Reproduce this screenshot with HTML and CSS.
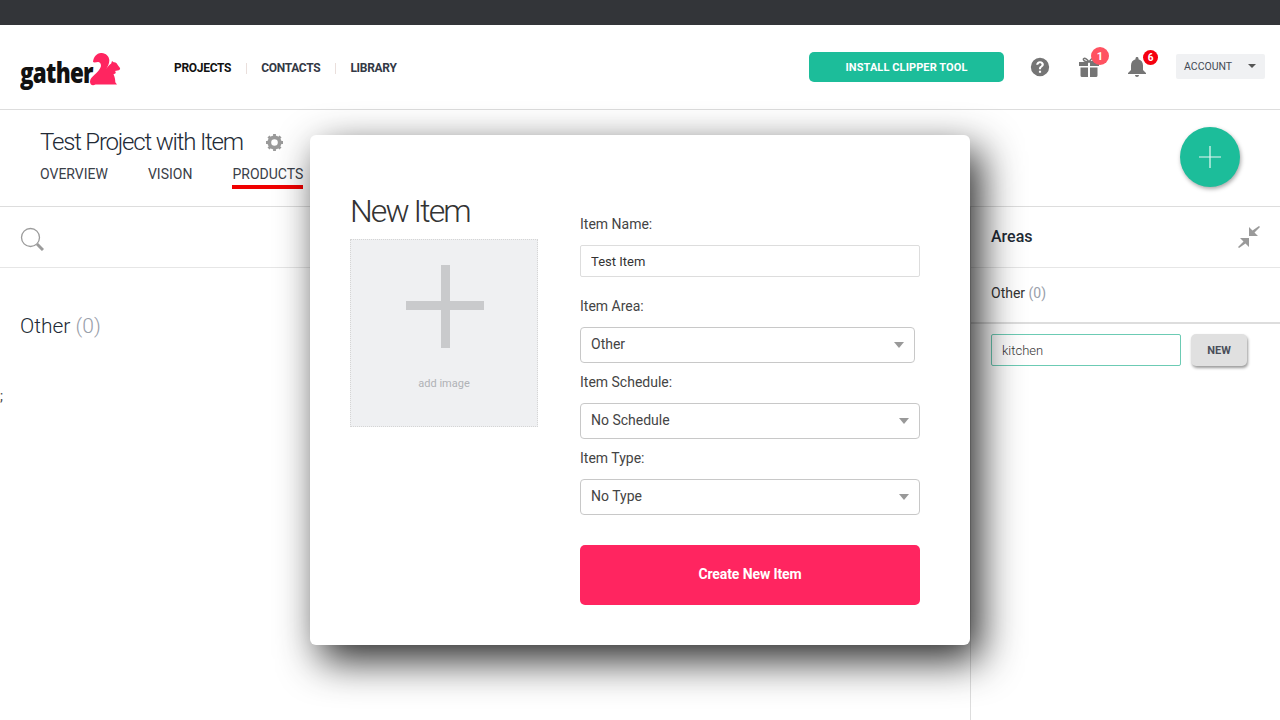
FILE: index.html
```html
<!DOCTYPE html>
<html lang="en">
<head>
    <meta charset="UTF-8">
    <title>Gather - New Item</title>
    <link rel="stylesheet" href="styles.css">
</head>
<body>

<div class="topbar"></div>

<header class="header">
    <a class="logo">
        <span class="logo-text">gather</span>
        <svg class="logo-mark" width="31" height="34" viewBox="0 0 31 34">
            <path fill="#ff2560" d="M3 9C3.500 4 6.500 .3 11 0c4.500-.2 8 3 8.300 7 .2 3.500-1.300 6-3.300 9.500 1.200-2.500 3-4.500 5.200-6l.8-2.500 1.700 1.300c2-.3 3.300 1 4 2.700l2.300 3c.3 1-.2 2-1.300 2.300l-3.700.7c.8.8 1 1.700.3 2.500l-1.800.8c1.300 2.500 1.800 5.500 1.800 7.900l1.700 2.300H5.500C2.200 33.500 0 31.500 0 28.500c0-2.500 2-4.500 4.500-6.800 2.500-2.300 5.500-5.200 6.300-8 .5-2-.3-4.200-2.300-4.700-2-.4-3.500 1.200-5.500 0z"/>
        </svg>
    </a>
    <nav class="main-nav">
        <a class="active">PROJECTS</a>
        <i></i>
        <a>CONTACTS</a>
        <i></i>
        <a>LIBRARY</a>
    </nav>
    <div class="header-right">
        <button class="install-btn">INSTALL CLIPPER TOOL</button>
        <svg class="help-icon" width="20" height="20" viewBox="0 0 24 24">
            <path fill="#757575" d="M12 1a11 11 0 1 0 0 22 11 11 0 0 0 0-22zm1.300 18h-2.600v-2.500h2.600V19zm2.700-8.200c-.5.800-1.300 1.300-1.900 1.800-.7.600-.9 1-.9 2.200h-2.500c0-2 .5-2.800 1.500-3.600.8-.6 1.700-1.100 1.700-2.200 0-.9-.7-1.600-1.800-1.600S10 8.200 9.900 9.400H7.400C7.500 6.800 9.400 5 12 5c2.700 0 4.600 1.600 4.600 4 0 .7-.2 1.300-.6 1.800z"/>
        </svg>
        <div class="icon-wrap gift">
            <svg width="20" height="20" viewBox="0 0 20 20">
                <path fill="none" stroke="#757575" stroke-width="1.500" d="M10 5C8 2 6 .8 4.800 1.600 3.500 2.500 5 5 10 5c5 0 6.500-2.500 5.200-3.400C14 .8 12 2 10 5z"/>
                <path fill="#757575" d="M0 5h9v4H0zM11 5h9v4h-9zM1.500 10.500H9V20H3a1.500 1.500 0 0 1-1.500-1.500zM11 10.500h7.500v8A1.500 1.500 0 0 1 17 20h-6z"/>
            </svg>
            <span class="badge badge-soft">1</span>
        </div>
        <div class="icon-wrap bell">
            <svg width="18" height="20" viewBox="0 0 18 20">
                <path fill="#757575" d="M9 0c1 0 1.500.7 1.500 1.500v.7C13.500 3 15 5.500 15 8.500V13l3 3v1H0v-1l3-3V8.500C3 5.500 4.500 3 7.500 2.200v-.7C7.500.7 8 0 9 0zM7 18h4c0 1.200-.9 2-2 2s-2-.8-2-2z"/>
            </svg>
            <span class="badge badge-red">6</span>
        </div>
        <div class="account">
            <span class="account-label">ACCOUNT</span>
            <span class="account-caret"></span>
        </div>
    </div>
</header>

<section class="project-head">
    <div class="project-title">
        <h1>Test Project with Item</h1>
        <svg width="17" height="17" viewBox="0 0 18 18">
            <circle cx="9" cy="9" r="5.500" fill="none" stroke="#9a9a9a" stroke-width="4"/>
            <path stroke="#9a9a9a" stroke-width="3" d="M9 0v18M0 9h18M2.600 2.600l12.800 12.800M15.400 2.600 2.600 15.400" stroke-dasharray="3 12"/>
        </svg>
    </div>
    <nav class="project-tabs">
        <a>OVERVIEW</a>
        <a>VISION</a>
        <a class="current">PRODUCTS</a>
    </nav>
    <button class="fab">
        <svg width="22" height="22" viewBox="0 0 22 22"><path stroke="#e8f8f4" stroke-width="1.200" d="M11 0v22M0 11h22"/></svg>
    </button>
</section>

<main class="content">
    <div class="products">
        <div class="search-row">
            <svg width="24" height="24" viewBox="0 0 24 24">
                <circle cx="10.500" cy="10.500" r="9" fill="none" stroke="#9b9b9b" stroke-width="1.300"/>
                <path stroke="#9b9b9b" stroke-width="3" d="M17 17l6 6"/>
            </svg>
        </div>
        <h3 class="group-title">Other <span>(0)</span></h3>
        <div class="stray">;</div>
    </div>
    <aside class="areas">
        <div class="areas-head">
            <strong>Areas</strong>
            <svg width="22" height="22" viewBox="0 0 22 22">
                <path fill="#9a9a9a" d="M21 0l1 1-5.500 5.500L20 10h-9V1l3.500 3.500zM1 22l-1-1 5.500-5.500L2 12h9v9l-3.500-3.500z"/>
            </svg>
        </div>
        <div class="areas-item">Other <span>(0)</span></div>
        <div class="areas-new">
            <input class="areas-input" type="text" value="kitchen">
            <button class="new-btn">NEW</button>
        </div>
    </aside>
</main>

<div class="modal">
    <div class="modal-left">
        <h2>New Item</h2>
        <div class="image-drop">
            <div class="plus"></div>
            <span>add image</span>
        </div>
    </div>
    <form class="modal-form">
        <label>Item Name:</label>
        <input class="field" type="text" value="Test Item">

        <label class="area-label">Item Area:</label>
        <div class="select short">Other</div>

        <label>Item Schedule:</label>
        <div class="select">No Schedule</div>

        <label>Item Type:</label>
        <div class="select">No Type</div>

        <button type="button" class="create-btn">Create New Item</button>
    </form>
</div>

</body>
</html>
```

FILE: styles.css
```css
* {
    box-sizing: border-box;
}
body {
    margin: 0;
    height: 720px;
    overflow: hidden;
    background-color: #fff;
    color: #333;
    font-family: Roboto, sans-serif;
    display: flex;
    flex-direction: column;
}
.topbar {
    height: 25px;
    background-color: #333539;
}

/* header */
.header {
    height: 85px;
    border-bottom: 1px solid #ddd;
    display: flex;
    align-items: center;
    padding: 0 15px 0 20px;
}
.logo {
    display: flex;
    align-items: flex-start;
    width: 154px;
    height: 40px;
}
.logo-text {
    font-family: "Open Sans", sans-serif;
    font-weight: 800;
    font-size: 28px;
    line-height: 40px;
    letter-spacing: -.9px;
    color: #111;
    margin-top: 5px;
    width: 70px;
    transform: scaleX(.8);
    transform-origin: left;
}
.logo-mark {
    margin-top: 6px;
}
.main-nav {
    display: flex;
    align-items: center;
    margin-top: 2px;
    font-size: 12px;
    font-weight: 700;
    letter-spacing: -.3px;
    color: #333945;
}
.main-nav .active {
    color: #111;
}
.main-nav i {
    width: 1px;
    height: 11px;
    margin: 0 14.500px;
    background-color: #eadfdc;
}
.header-right {
    margin-left: auto;
    display: flex;
    align-items: center;
}
.install-btn {
    width: 195px;
    height: 30px;
    margin-right: 26px;
    border: 0;
    border-radius: 5px;
    background-color: #1cbd9a;
    color: #fff;
    font-family: Roboto, sans-serif;
    font-size: 11px;
    font-weight: 700;
    letter-spacing: .1px;
}
.help-icon {
    margin-right: 29px;
}
.icon-wrap {
    position: relative;
    height: 20px;
}
.gift {
    margin-right: 29px;
}
.bell {
    margin-right: 30px;
}
.badge {
    position: absolute;
    display: flex;
    align-items: center;
    justify-content: center;
    border-radius: 50%;
    color: #fff;
    font-weight: 700;
}
.badge-soft {
    top: -10px;
    left: 12px;
    width: 18px;
    height: 18px;
    font-size: 11px;
    background-color: #ff5261;
}
.badge-red {
    top: -7px;
    left: 15px;
    width: 15px;
    height: 15px;
    font-size: 10px;
    background-color: #f5000f;
}
.account {
    width: 89px;
    height: 25px;
    margin-top: -2px;
    display: flex;
    align-items: center;
    background-color: #f0f1f3;
    border-radius: 2px;
    font-size: 10.500px;
    color: #444a55;
}
.account-label {
    width: 64px;
    padding-left: 8px;
}
.account-caret {
    margin-left: 8px;
    border: 4px solid transparent;
    border-top: 4px solid #555;
    border-bottom: 0;
}

/* project title and tabs */
.project-head {
    position: relative;
    height: 97px;
    border-bottom: 1px solid #ddd;
    padding: 16px 40px 0;
}
.project-title {
    display: flex;
    align-items: center;
    gap: 23px;
    height: 32px;
}
.project-title h1 {
    margin: 0;
    font-size: 24px;
    font-weight: 300;
    letter-spacing: -1.200px;
    color: #222a35;
}
.project-tabs {
    display: flex;
    gap: 40px;
    margin-top: 8px;
    font-size: 14px;
    color: #3a4048;
}
.project-tabs a {
    padding-bottom: 3px;
}
.project-tabs .current {
    border-bottom: 4px solid #f00000;
}
.fab {
    position: absolute;
    top: 17px;
    right: 40px;
    width: 60px;
    height: 60px;
    border: 0;
    border-radius: 50%;
    background-color: #1cbd9a;
    box-shadow: 1px 2px 4px rgba(0, 0, 0, .35);
    display: flex;
    align-items: center;
    justify-content: center;
}

/* page body */
.content {
    flex: 1;
    display: flex;
}
.products {
    flex: 1;
}
.search-row {
    height: 61px;
    border-bottom: 1px solid #e6e6e6;
    padding: 20px 20px 0;
}
.group-title {
    margin: 45px 20px 0;
    font-size: 21px;
    line-height: 27px;
    font-weight: 300;
    color: #222a35;
}
.group-title span {
    color: #9aa0aa;
}
.stray {
    margin-top: 48px;
    font-size: 14px;
    color: #444;
}
.areas {
    width: 310px;
    border-left: 1px solid #ddd;
}
.areas-head {
    height: 61px;
    border-bottom: 1px solid #e6e6e6;
    padding: 0 20px;
    display: flex;
    align-items: center;
    justify-content: space-between;
    font-size: 16px;
    color: #222a35;
}
.areas-head strong {
    font-weight: 500;
    margin-top: -1px;
}
.areas-item {
    height: 56px;
    border-bottom: 2px solid #ddd;
    padding: 17px 20px 0;
    font-size: 14px;
    color: #333;
}
.areas-item span {
    color: #9aa0aa;
}
.areas-new {
    display: flex;
    align-items: center;
    padding: 10px 20px;
    gap: 10px;
}
.areas-input {
    width: 190px;
    height: 32px;
    padding: 0 10px;
    border: 1px solid #6ccbb4;
    border-radius: 2px;
    font-family: Roboto, sans-serif;
    font-size: 13px;
    font-weight: 300;
    color: #333;
}
.new-btn {
    width: 56px;
    height: 32px;
    border: 0;
    border-radius: 5px;
    background-color: #e0e0e0;
    box-shadow: 1px 2px 3px rgba(0, 0, 0, .4);
    font-family: Roboto, sans-serif;
    font-size: 11px;
    font-weight: 700;
    color: #4a4f5a;
}

/* modal */
.modal {
    position: absolute;
    left: 310px;
    top: 135px;
    width: 660px;
    height: 510px;
    display: flex;
    padding: 0 50px 0 40px;
    background-color: #fff;
    border-radius: 6px;
    box-shadow: 10px 15px 40px rgba(0, 0, 0, .85);
}
.modal-left {
    width: 230px;
    padding-top: 56px;
}
.modal-left h2 {
    margin: 0 0 8px;
    font-size: 32px;
    line-height: 40px;
    font-weight: 300;
    letter-spacing: -1.900px;
    color: #333;
}
.image-drop {
    position: relative;
    width: 188px;
    height: 188px;
    background-color: #eff0f2;
    border: 1px dotted #d5d5d5;
    text-align: center;
}
.plus {
    position: absolute;
    left: 55px;
    top: 25px;
    width: 78px;
    height: 83px;
    background:
        linear-gradient(#c9cacc, #c9cacc) center / 9px 100% no-repeat,
        linear-gradient(#c9cacc, #c9cacc) center 36px / 100% 9px no-repeat;
}
.image-drop span {
    position: absolute;
    left: 0;
    right: 0;
    top: 137px;
    font-size: 11px;
    color: #b0b2b6;
}
.modal-form {
    width: 340px;
    padding-top: 79px;
    display: flex;
    flex-direction: column;
}
.modal-form label {
    font-size: 14px;
    line-height: 20px;
    color: #444;
}
.field {
    width: 100%;
    height: 32px;
    margin-top: 11px;
    padding: 0 10px;
    border: 1px solid #ddd;
    border-radius: 2px;
    font-family: Roboto, sans-serif;
    font-size: 13px;
    color: #333;
}
.area-label {
    margin-top: 19px;
}
.select {
    position: relative;
    height: 36px;
    margin: 11px 0 9px;
    padding-left: 10px;
    border: 1px solid #c8c8c8;
    border-radius: 4px;
    font-size: 14px;
    line-height: 33px;
    color: #444;
}
.select::after {
    content: "";
    position: absolute;
    right: 10px;
    top: 14px;
    border: 5.500px solid transparent;
    border-top: 6px solid #999;
    border-bottom: 0;
}
.short {
    width: 335px;
}
.create-btn {
    height: 60px;
    margin-top: 21px;
    padding-bottom: 3px;
    border: 0;
    border-radius: 5px;
    background-color: #ff2560;
    color: #fff;
    font-family: Roboto, sans-serif;
    font-size: 14px;
    font-weight: 700;
    letter-spacing: -.1px;
}
```
